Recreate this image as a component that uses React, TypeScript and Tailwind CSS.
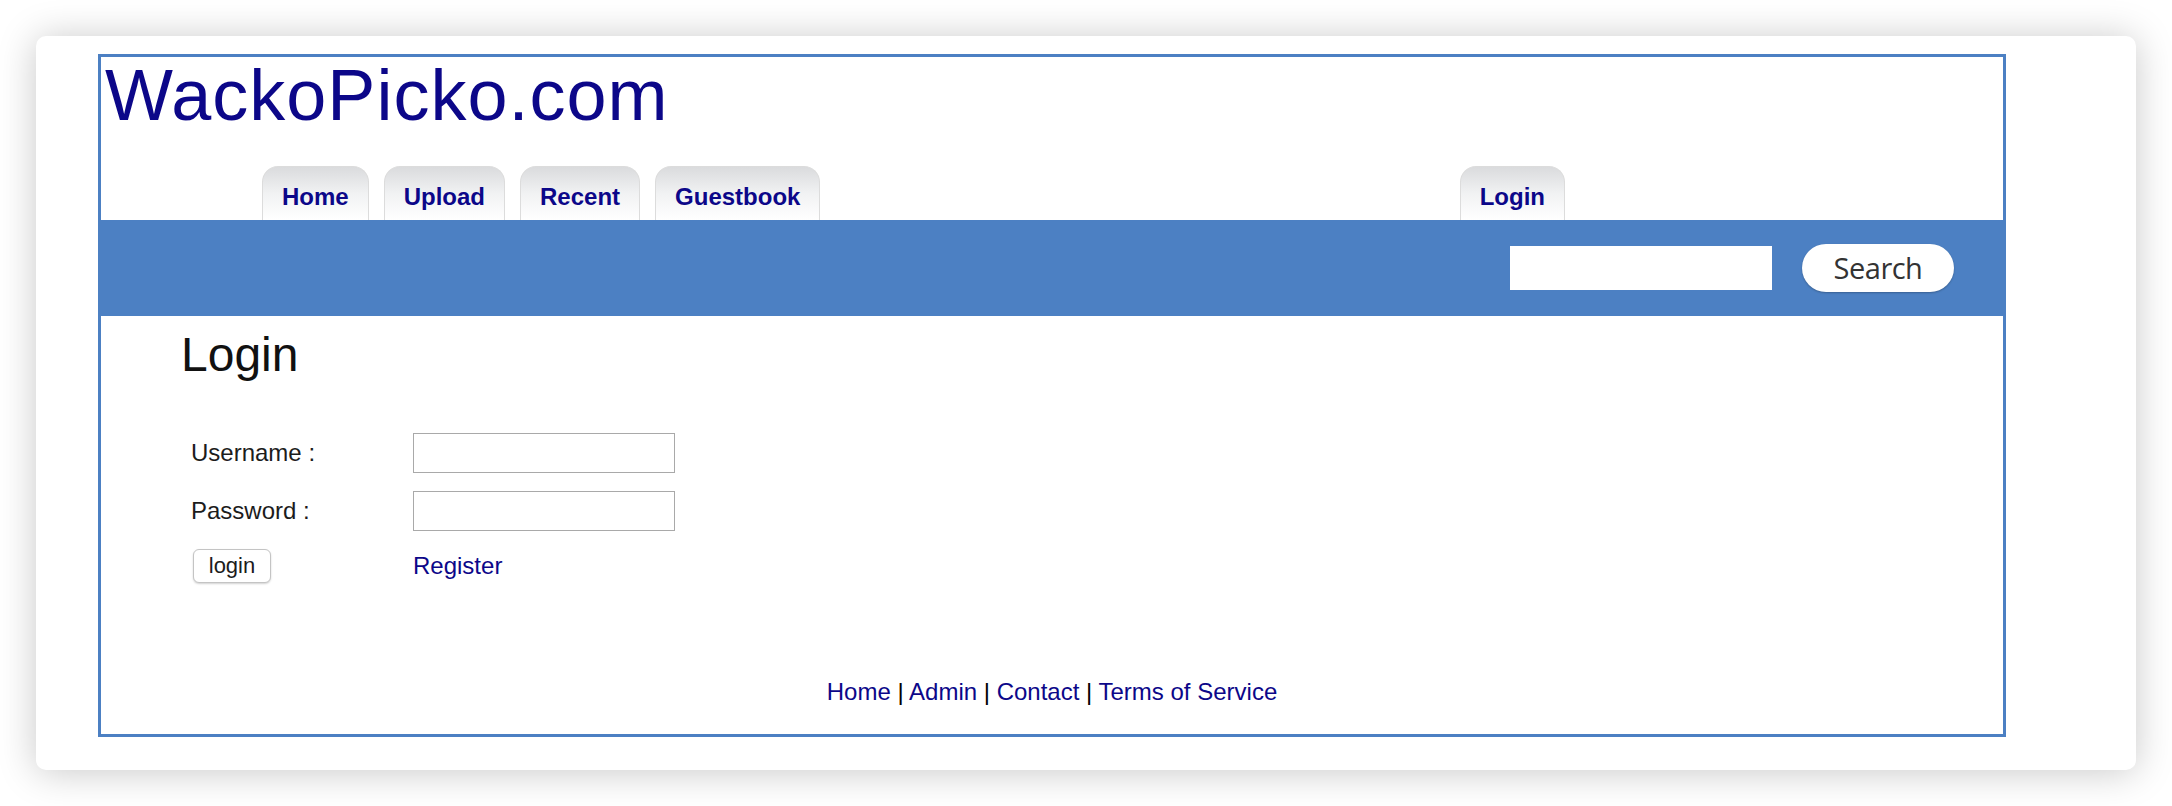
import React from "react";

const tabs = ["Home", "Upload", "Recent", "Guestbook"];

function Tab({ label }: { label: string }) {
  return (
    <div className="h-[54px] px-[19px] pt-[5px] rounded-t-[16px] border border-b-0 border-[#dcdcdc] bg-linear-to-b from-[#dadbdd] via-[#f1f2f3] to-white">
      <a className="block text-[24px] leading-[49px] font-bold text-[#0c0789]">{label}</a>
    </div>
  );
}

export default function App() {
  return (
    <div className="w-[2172px] h-[806px] bg-white pt-[36px] pl-[36px] overflow-hidden font-['Liberation_Sans',Arial,sans-serif]">
      <div className="w-[2100px] h-[734px] rounded-[10px] bg-white shadow-[0_2px_38px_rgba(0,0,0,0.22)] pt-[18px] pl-[62px]">
        <div className="w-[1908px] h-[683px] border-[3px] border-[#4c80c3] flex flex-col">
          <div className="pl-[4px] mt-[2px] text-[72px] leading-[72px] tracking-[1px] text-[#0c0789]">
            WackoPicko.com
          </div>
          <div className="mt-[35px] h-[54px] flex gap-[15px] pl-[161px] pr-[438px]">
            {tabs.map((t) => (
              <Tab key={t} label={t} />
            ))}
            <div className="ml-auto">
              <Tab label="Login" />
            </div>
          </div>
          <div className="h-[96px] bg-[#4c80c3] flex items-center justify-end gap-[30px] pr-[49px]">
            <input className="w-[262px] h-[44px] bg-white border-0 outline-none" />
            <button className="w-[152px] h-[48px] rounded-full bg-white text-[29px] leading-[48px] font-medium tracking-[-0.5px] text-[#333] font-['Open_Sans',sans-serif] shadow-[0_1px_2px_rgba(0,0,0,0.25)]">
              Search
            </button>
          </div>
          <h1 className="ml-[80px] mt-[15px] text-[48px] leading-[48px] font-normal text-[#111]">
            Login
          </h1>
          <div className="ml-[90px] mt-[54px] grid grid-cols-[222px_262px] gap-y-[18px] items-center text-[24px] leading-[24px] text-[#1c1c1c]">
            <div>Username :</div>
            <input className="w-[262px] h-[40px] border border-[#a9a9a9] bg-white outline-none" />
            <div>Password :</div>
            <input className="w-[262px] h-[40px] border border-[#a9a9a9] bg-white outline-none" />
            <div>
              <button className="ml-[2px] w-[78px] h-[34px] rounded-[6px] border border-[#c4c4c4] bg-white text-[22px] leading-[22px] text-[#1c1c1c] shadow-[0_1px_2px_rgba(0,0,0,0.18)]">
                login
              </button>
            </div>
            <a className="text-[#0c0789]">Register</a>
          </div>
          <div className="mt-auto pb-[30px] text-center text-[24px] leading-[24px] text-black">
            <a className="text-[#0c0789]">Home</a> | <a className="text-[#0c0789]">Admin</a> |{" "}
            <a className="text-[#0c0789]">Contact</a> | <a className="text-[#0c0789]">Terms of Service</a>
          </div>
        </div>
      </div>
    </div>
  );
}
